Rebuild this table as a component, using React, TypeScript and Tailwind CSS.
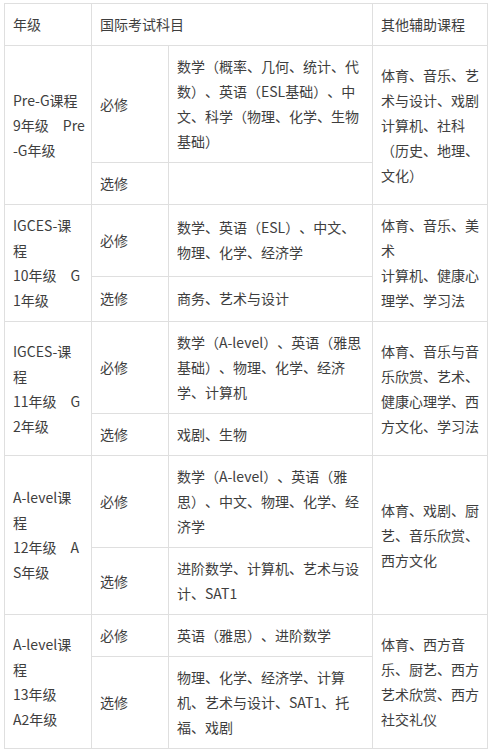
const courses = [
  {
    grade: ['Pre-G课程', '9年级　Pre', '-G年级'],
    required: '数学（概率、几何、统计、代数）、英语（ESL基础）、中文、科学（物理、化学、生物基础）',
    elective: '',
    other: ['体育、音乐、艺术与设计、戏剧', '计算机、社科（历史、地理、文化）'],
  },
  {
    grade: ['IGCES-课', '程', '10年级　G', '1年级'],
    required: '数学、英语（ESL）、中文、物理、化学、经济学',
    elective: '商务、艺术与设计',
    other: ['体育、音乐、美术', '计算机、健康心理学、学习法'],
  },
  {
    grade: ['IGCES-课', '程', '11年级　G', '2年级'],
    required: '数学（A-level）、英语（雅思基础）、物理、化学、经济学、计算机',
    elective: '戏剧、生物',
    other: ['体育、音乐与音乐欣赏、艺术、健康心理学、西方文化、学习法'],
  },
  {
    grade: ['A-level课', '程', '12年级　A', 'S年级'],
    required: '数学（A-level）、英语（雅思）、中文、物理、化学、经济学',
    elective: '进阶数学、计算机、艺术与设计、SAT1',
    other: ['体育、戏剧、厨艺、音乐欣赏、西方文化'],
  },
  {
    grade: ['A-level课', '程', '13年级', 'A2年级'],
    required: '英语（雅思）、进阶数学',
    elective: '物理、化学、经济学、计算机、艺术与设计、SAT1、托福、戏剧',
    other: ['体育、西方音乐、厨艺、西方艺术欣赏、西方社交礼仪'],
  },
]

const cell = 'border border-[#dfdfdf] px-2 py-2 align-middle'

export default function App() {
  return (
    <div className="min-h-[753px] bg-white pl-[4px] pt-[3px] font-['Noto_Sans_CJK_SC',sans-serif] text-[14px] leading-[25px] text-[#3e3e3e] [text-spacing-trim:space-all]">
      <table className="w-[483px] table-fixed border-collapse">
        <colgroup>
          <col className="w-[87px]" />
          <col className="w-[77px]" />
          <col className="w-[204px]" />
          <col className="w-[115px]" />
        </colgroup>
        <tbody>
          <tr>
            <td className={cell}>年级</td>
            <td className={cell} colSpan={2}>
              国际考试科目
            </td>
            <td className={cell}>其他辅助课程</td>
          </tr>
          {courses.map((c) => (
            <CourseRows key={c.grade.join('')} course={c} />
          ))}
        </tbody>
      </table>
    </div>
  )
}

function CourseRows({ course }: { course: (typeof courses)[number] }) {
  return (
    <>
      <tr>
        <td className={cell + ' whitespace-nowrap'} rowSpan={2}>
          {course.grade.map((line) => (
            <div key={line}>{line}</div>
          ))}
        </td>
        <td className={cell}>必修</td>
        <td className={cell}>{course.required}</td>
        <td className={cell} rowSpan={2}>
          {course.other.map((line) => (
            <div key={line}>{line}</div>
          ))}
        </td>
      </tr>
      <tr>
        <td className={cell}>选修</td>
        <td className={cell}>{course.elective}</td>
      </tr>
    </>
  )
}
